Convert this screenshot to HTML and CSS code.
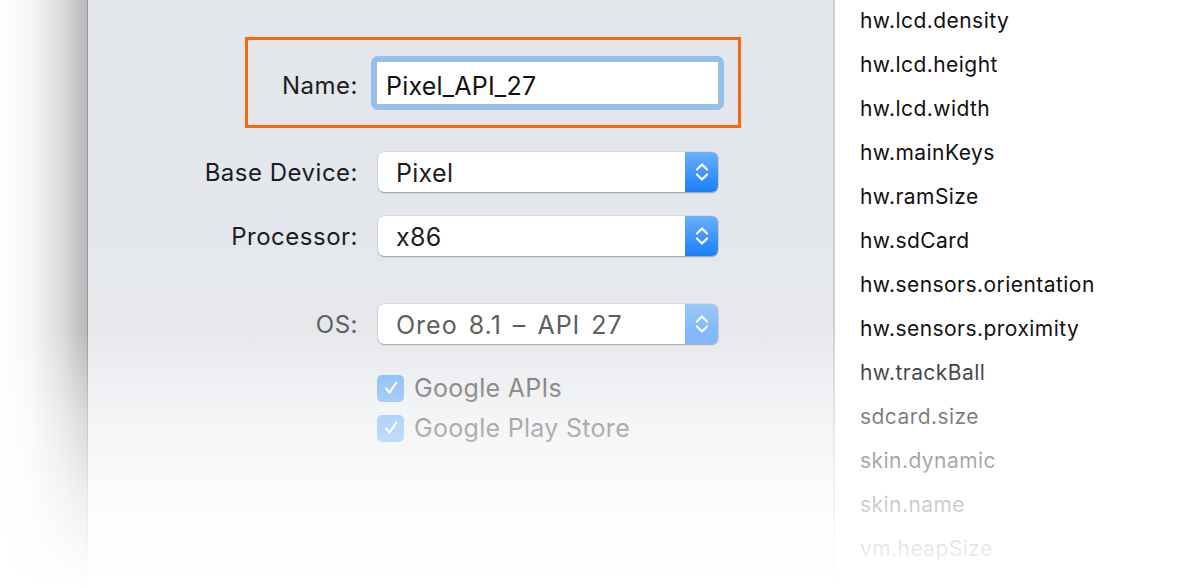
FILE: index.html
```html
<!DOCTYPE html>
<html lang="en">
<head>
  <meta charset="UTF-8">
  <title>Virtual Device Configuration</title>
  <link rel="stylesheet" href="styles.css">
</head>
<body>
  <div class="page">
    <div class="backdrop"></div>
    <div class="panel">
      <div class="form">
        <div class="name-box">
          <label class="label name-label" for="avdName">Name:</label>
          <div class="field-ring">
            <input class="field" id="avdName" type="text" value="Pixel_API_27">
          </div>
        </div>

        <div class="row first">
          <span class="label">Base Device:</span>
          <div class="select">
            <span class="select-text">Pixel</span>
            <span class="stepper">
              <svg width="16" height="22" viewBox="0 0 16 22"><path d="M3 8.5 L8 3.5 L13 8.5 M3 13.5 L8 18.5 L13 13.5" fill="none" stroke="#fff" stroke-width="2.2" stroke-linecap="round" stroke-linejoin="round"/></svg>
            </span>
          </div>
        </div>

        <div class="row">
          <span class="label">Processor:</span>
          <div class="select">
            <span class="select-text">x86</span>
            <span class="stepper">
              <svg width="16" height="22" viewBox="0 0 16 22"><path d="M3 8.5 L8 3.5 L13 8.5 M3 13.5 L8 18.5 L13 13.5" fill="none" stroke="#fff" stroke-width="2.2" stroke-linecap="round" stroke-linejoin="round"/></svg>
            </span>
          </div>
        </div>

        <div class="row os disabled">
          <span class="label">OS:</span>
          <div class="select">
            <span class="select-text os-text">Oreo 8.1 – API 27</span>
            <span class="stepper">
              <svg width="16" height="22" viewBox="0 0 16 22"><path d="M3 8.5 L8 3.5 L13 8.5 M3 13.5 L8 18.5 L13 13.5" fill="none" stroke="#fff" stroke-width="2.2" stroke-linecap="round" stroke-linejoin="round"/></svg>
            </span>
          </div>
        </div>

        <div class="checks">
          <div class="check-row">
            <span class="checkbox">
              <svg width="18" height="18" viewBox="0 0 18 18"><path d="M4 9.5 L7.6 13.5 L14 4" fill="none" stroke="#fff" stroke-width="2.2" stroke-linecap="round" stroke-linejoin="round"/></svg>
            </span>
            <span class="check-text">Google APIs</span>
          </div>
          <div class="check-row">
            <span class="checkbox">
              <svg width="18" height="18" viewBox="0 0 18 18"><path d="M4 9.5 L7.6 13.5 L14 4" fill="none" stroke="#fff" stroke-width="2.2" stroke-linecap="round" stroke-linejoin="round"/></svg>
            </span>
            <span class="check-text">Google Play Store</span>
          </div>
        </div>
      </div>
    </div>

    <ul class="props">
      <li>hw.lcd.density</li>
      <li>hw.lcd.height</li>
      <li>hw.lcd.width</li>
      <li>hw.mainKeys</li>
      <li>hw.ramSize</li>
      <li>hw.sdCard</li>
      <li>hw.sensors.orientation</li>
      <li>hw.sensors.proximity</li>
      <li>hw.trackBall</li>
      <li>sdcard.size</li>
      <li>skin.dynamic</li>
      <li>skin.name</li>
      <li>vm.heapSize</li>
    </ul>

    <div class="fade"></div>
  </div>
</body>
</html>
```

FILE: styles.css
```css
body {
  margin: 0;
  background: #fff;
  font-family: Inter, "Noto Sans", sans-serif;
  color: #1d1d1d;
}
.page {
  position: relative;
  display: flex;
  width: 1188px;
  height: 588px;
  overflow: hidden;
}
.backdrop {
  width: 87px;
  flex-shrink: 0;
  background: linear-gradient(to right, #fff 0%, #f6f6f6 35%, #dcdcdc 70%, #b9b9b9 100%);
}
.panel {
  width: 745px;
  flex-shrink: 0;
  border-left: 1px solid #989898;
  border-right: 2px solid #cdd1d6;
  background: linear-gradient(to bottom, #e3e6ea 0, #e4e7eb 240px, #e6e8ec 330px, #eceef1 460px, #f6f7f8 560px);
}
.form {
  padding-top: 37px;
}
.label {
  font-size: 24px;
  letter-spacing: 0.5px;
  text-align: right;
  color: #1d1d1d;
}

/* name field, highlighted */
.name-box {
  display: flex;
  align-items: center;
  box-sizing: border-box;
  width: 496px;
  height: 91px;
  margin-left: 157px;
  border: 3px solid #f46a0c;
}
.name-label {
  width: 110px;
  margin-right: 13px;
  margin-top: 6px;
}
.field-ring {
  width: 353px;
  box-sizing: border-box;
  padding: 5px;
  border-radius: 7px;
  background: #91c0f1;
}
.field {
  display: block;
  width: 100%;
  height: 44px;
  box-sizing: border-box;
  border: 1px solid #b4b8bd;
  padding: 6px 0 0 9px;
  font-family: inherit;
  font-size: 25px;
  letter-spacing: 0.2px;
  color: #111;
  background: #fff;
  outline: none;
}

/* popup rows */
.row {
  display: grid;
  grid-template-columns: 270px 340px;
  column-gap: 20px;
  align-items: center;
  margin-top: 24px;
}
.row.os {
  margin-top: 48px;
}
.select {
  display: flex;
  height: 40px;
  border-radius: 6px;
  background: #fff;
  box-shadow: 0 0 0 0.5px rgba(0,0,0,0.12), 0 1px 1.5px rgba(0,0,0,0.28);
  overflow: hidden;
}
.select-text {
  flex: 1;
  padding-left: 18px;
  line-height: 42px;
  font-size: 25px;
  letter-spacing: 0.3px;
  color: #1d1d1d;
}
.os-text {
  letter-spacing: 1px;
  word-spacing: 3px;
}
.stepper {
  display: flex;
  align-items: center;
  justify-content: center;
  width: 33px;
  background: linear-gradient(to bottom, #6aaffb, #1b7ffb);
}
.disabled .label,
.disabled .select-text {
  color: #5e5e5e;
}
.disabled .stepper {
  background: linear-gradient(to bottom, #9cc8fa, #77b2fa);
}

/* checkboxes */
.checks {
  margin-top: 24px;
  padding-left: 289px;
}
.check-row {
  display: flex;
  align-items: center;
  height: 40px;
}
.checkbox {
  display: flex;
  align-items: center;
  justify-content: center;
  width: 27px;
  height: 27px;
  border-radius: 5px;
  background: #72b0f7;
  margin-right: 10px;
}
.check-text {
  font-size: 25px;
  letter-spacing: 0.3px;
  color: #5a5a5a;
}

/* property list */
.props {
  flex: 1;
  list-style: none;
  margin: -1px 0 0;
  padding: 0 0 0 25px;
}
.props li {
  height: 44px;
  line-height: 44px;
  font-size: 21px;
  letter-spacing: 0.45px;
  color: #111;
}

.fade {
  position: absolute;
  left: 0;
  top: 0;
  right: 0;
  bottom: 0;
  pointer-events: none;
  background: linear-gradient(to bottom, rgba(255,255,255,0) 0, rgba(255,255,255,0) 330px, rgba(255,255,255,0.45) 416px, rgba(255,255,255,0.78) 504px, rgba(255,255,255,0.93) 560px, #fff 588px);
}
```
